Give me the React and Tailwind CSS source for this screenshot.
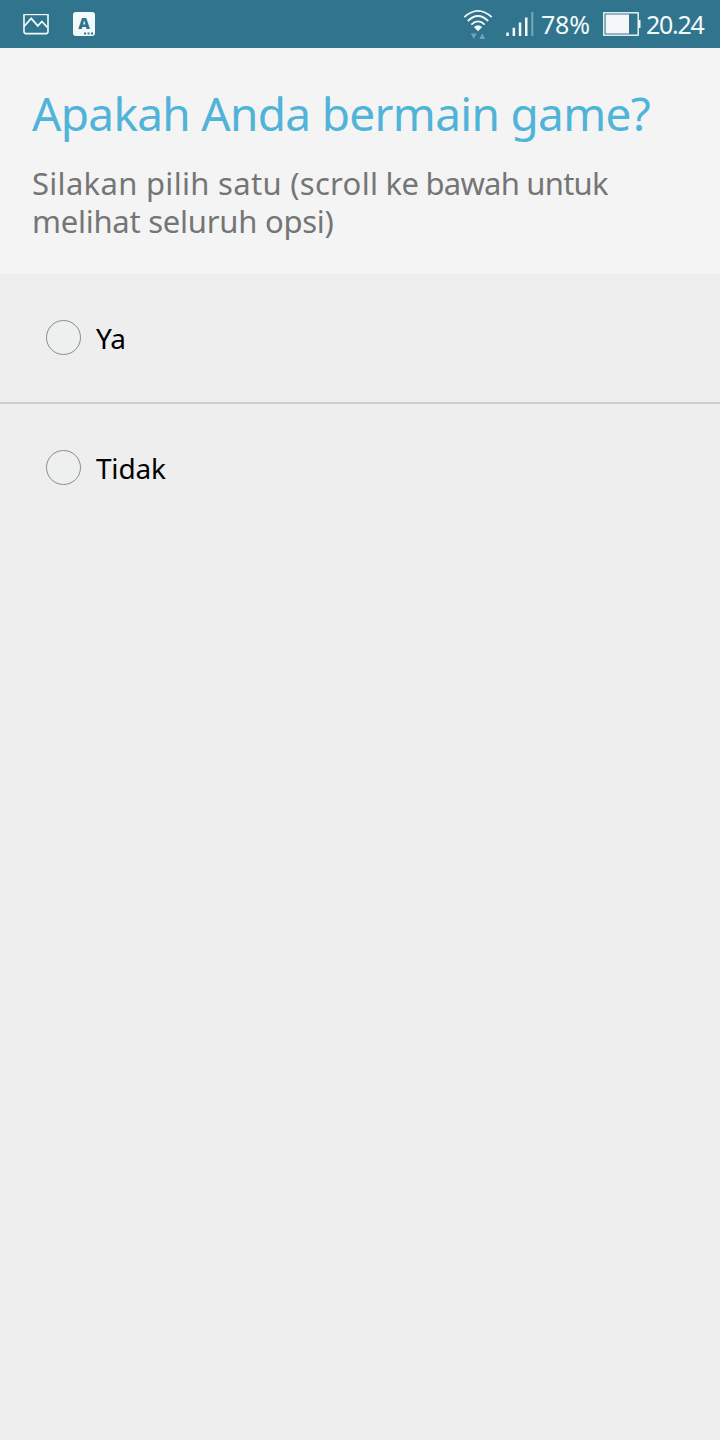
function ImageIcon() {
  return (
    <svg width="26" height="22" viewBox="0 0 26 22" fill="none" stroke="#f2f9fb">
      <path d="M1 1.8V18.6Q1 20.6 3 20.6H23Q25 20.6 25 18.6V1.8" strokeWidth="1.6" />
      <path d="M.3 1.6H25.7" strokeWidth="1.2" />
      <path d="M1 13.5 8.2 5.4l6.6 7.5 4.1-4.4 5.6 6" strokeWidth="1.8" />
    </svg>
  );
}

function AppBadge() {
  return (
    <div className="relative flex h-6 w-[22px] justify-center rounded-[3px] bg-[#f2f9fb] font-['Noto_Sans',sans-serif] text-[16px] leading-[23px] font-black text-[#30728b]">
      A
      <svg className="absolute right-[2px] bottom-[1px]" width="9" height="3" viewBox="0 0 9 3" fill="#30728b">
        <path d="M0 .5h2v2H0zM3.5 .5h2v2h-2zM7 .5h2v2H7z" />
      </svg>
    </div>
  );
}

function WifiIcon() {
  return (
    <svg width="30" height="32" viewBox="0 0 30 32" fill="none" stroke="#f2f9fb" strokeWidth="1.8">
      <path d="M1.3 9.1Q15-3.4 28.7 9.1M4.8 13Q15 3 25.2 13M8.3 16.6Q15 10.2 21.7 16.6" />
      <path d="M10.8 19Q15 15.5 19.2 19L15 23.3z" fill="#f2f9fb" stroke="none" />
      <path d="M7.8 25.5h6L10.8 31zM16.2 31h6L19.2 25.5z" fill="#75a4b6" stroke="none" />
    </svg>
  );
}

function SignalIcon() {
  return (
    <svg width="28" height="25" viewBox="0 0 28 25" fill="#f2f9fb">
      <path d="M.3 20.4h2.5V24H.3zM6.6 15.8h2.5V24H6.6zM12.8 10.5h2.5V24h-2.5zM19 5.4h2.5V24H19z" />
      <path d="M25.3 0h2v24h-2z" fill="#7ba7b7" />
    </svg>
  );
}

function BatteryIcon() {
  return (
    <svg width="38" height="24" viewBox="0 0 38 24">
      <rect x="0.8" y="0.8" width="34.4" height="22.4" fill="none" stroke="#f2f9fb" strokeWidth="1.4" />
      <path d="M2.6 2.6H26v18.8H2.6zM35.5 8h2v8h-2z" fill="#f4f6f7" />
    </svg>
  );
}

function StatusBar() {
  return (
    <header className="flex h-12 items-center bg-[#31748e] pr-4 pl-[23px] font-['Noto_Sans',sans-serif] text-[25px] text-[#f2f9fb]">
      <ImageIcon />
      <div className="ml-6">
        <AppBadge />
      </div>
      <div className="ml-auto flex items-center">
        <WifiIcon />
        <div className="ml-[13px]">
          <SignalIcon />
        </div>
        <span className="ml-[7px] w-[62px] pt-px tracking-[-0.2px]">78%</span>
        <BatteryIcon />
        <span className="ml-[5px] w-[58px] pt-px tracking-[-1.3px]">20.24</span>
      </div>
    </header>
  );
}

function Option({ label }) {
  return (
    <label className="flex h-[128px] items-start pt-[46px] pl-[46px]">
      <input type="radio" name="game" className="size-[35px] appearance-none rounded-full border border-[#8a8c8c] bg-[#eef0f0]" />
      <span className="ml-[15px] text-[28px] leading-[37px] tracking-[-0.2px] text-black">{label}</span>
    </label>
  );
}

export default function App() {
  return (
    <div className="flex min-h-[1440px] w-full flex-col bg-[#eeeeee] font-['Noto_Sans',sans-serif]">
      <StatusBar />
      <section className="h-[226px] bg-[#f4f4f4] px-8 pt-8">
        <h1 className="text-[46px] leading-[66px] tracking-[-0.7px] whitespace-nowrap text-[#50b3d8]">Apakah Anda bermain game?</h1>
        <p className="mt-[18px] text-[31px] leading-[38px] tracking-[-0.25px] whitespace-nowrap text-[#747676]">
          <span className="tracking-[0.3px]">Silakan pilih satu (scroll</span>
          <span className="tracking-[-0.75px]"> ke bawah untuk</span>
          <br />
          melihat seluruh opsi)
        </p>
      </section>
      <main>
        <Option label="Ya" />
        <hr className="h-[2px] border-0 bg-[#cccccc]" />
        <Option label="Tidak" />
      </main>
    </div>
  );
}
